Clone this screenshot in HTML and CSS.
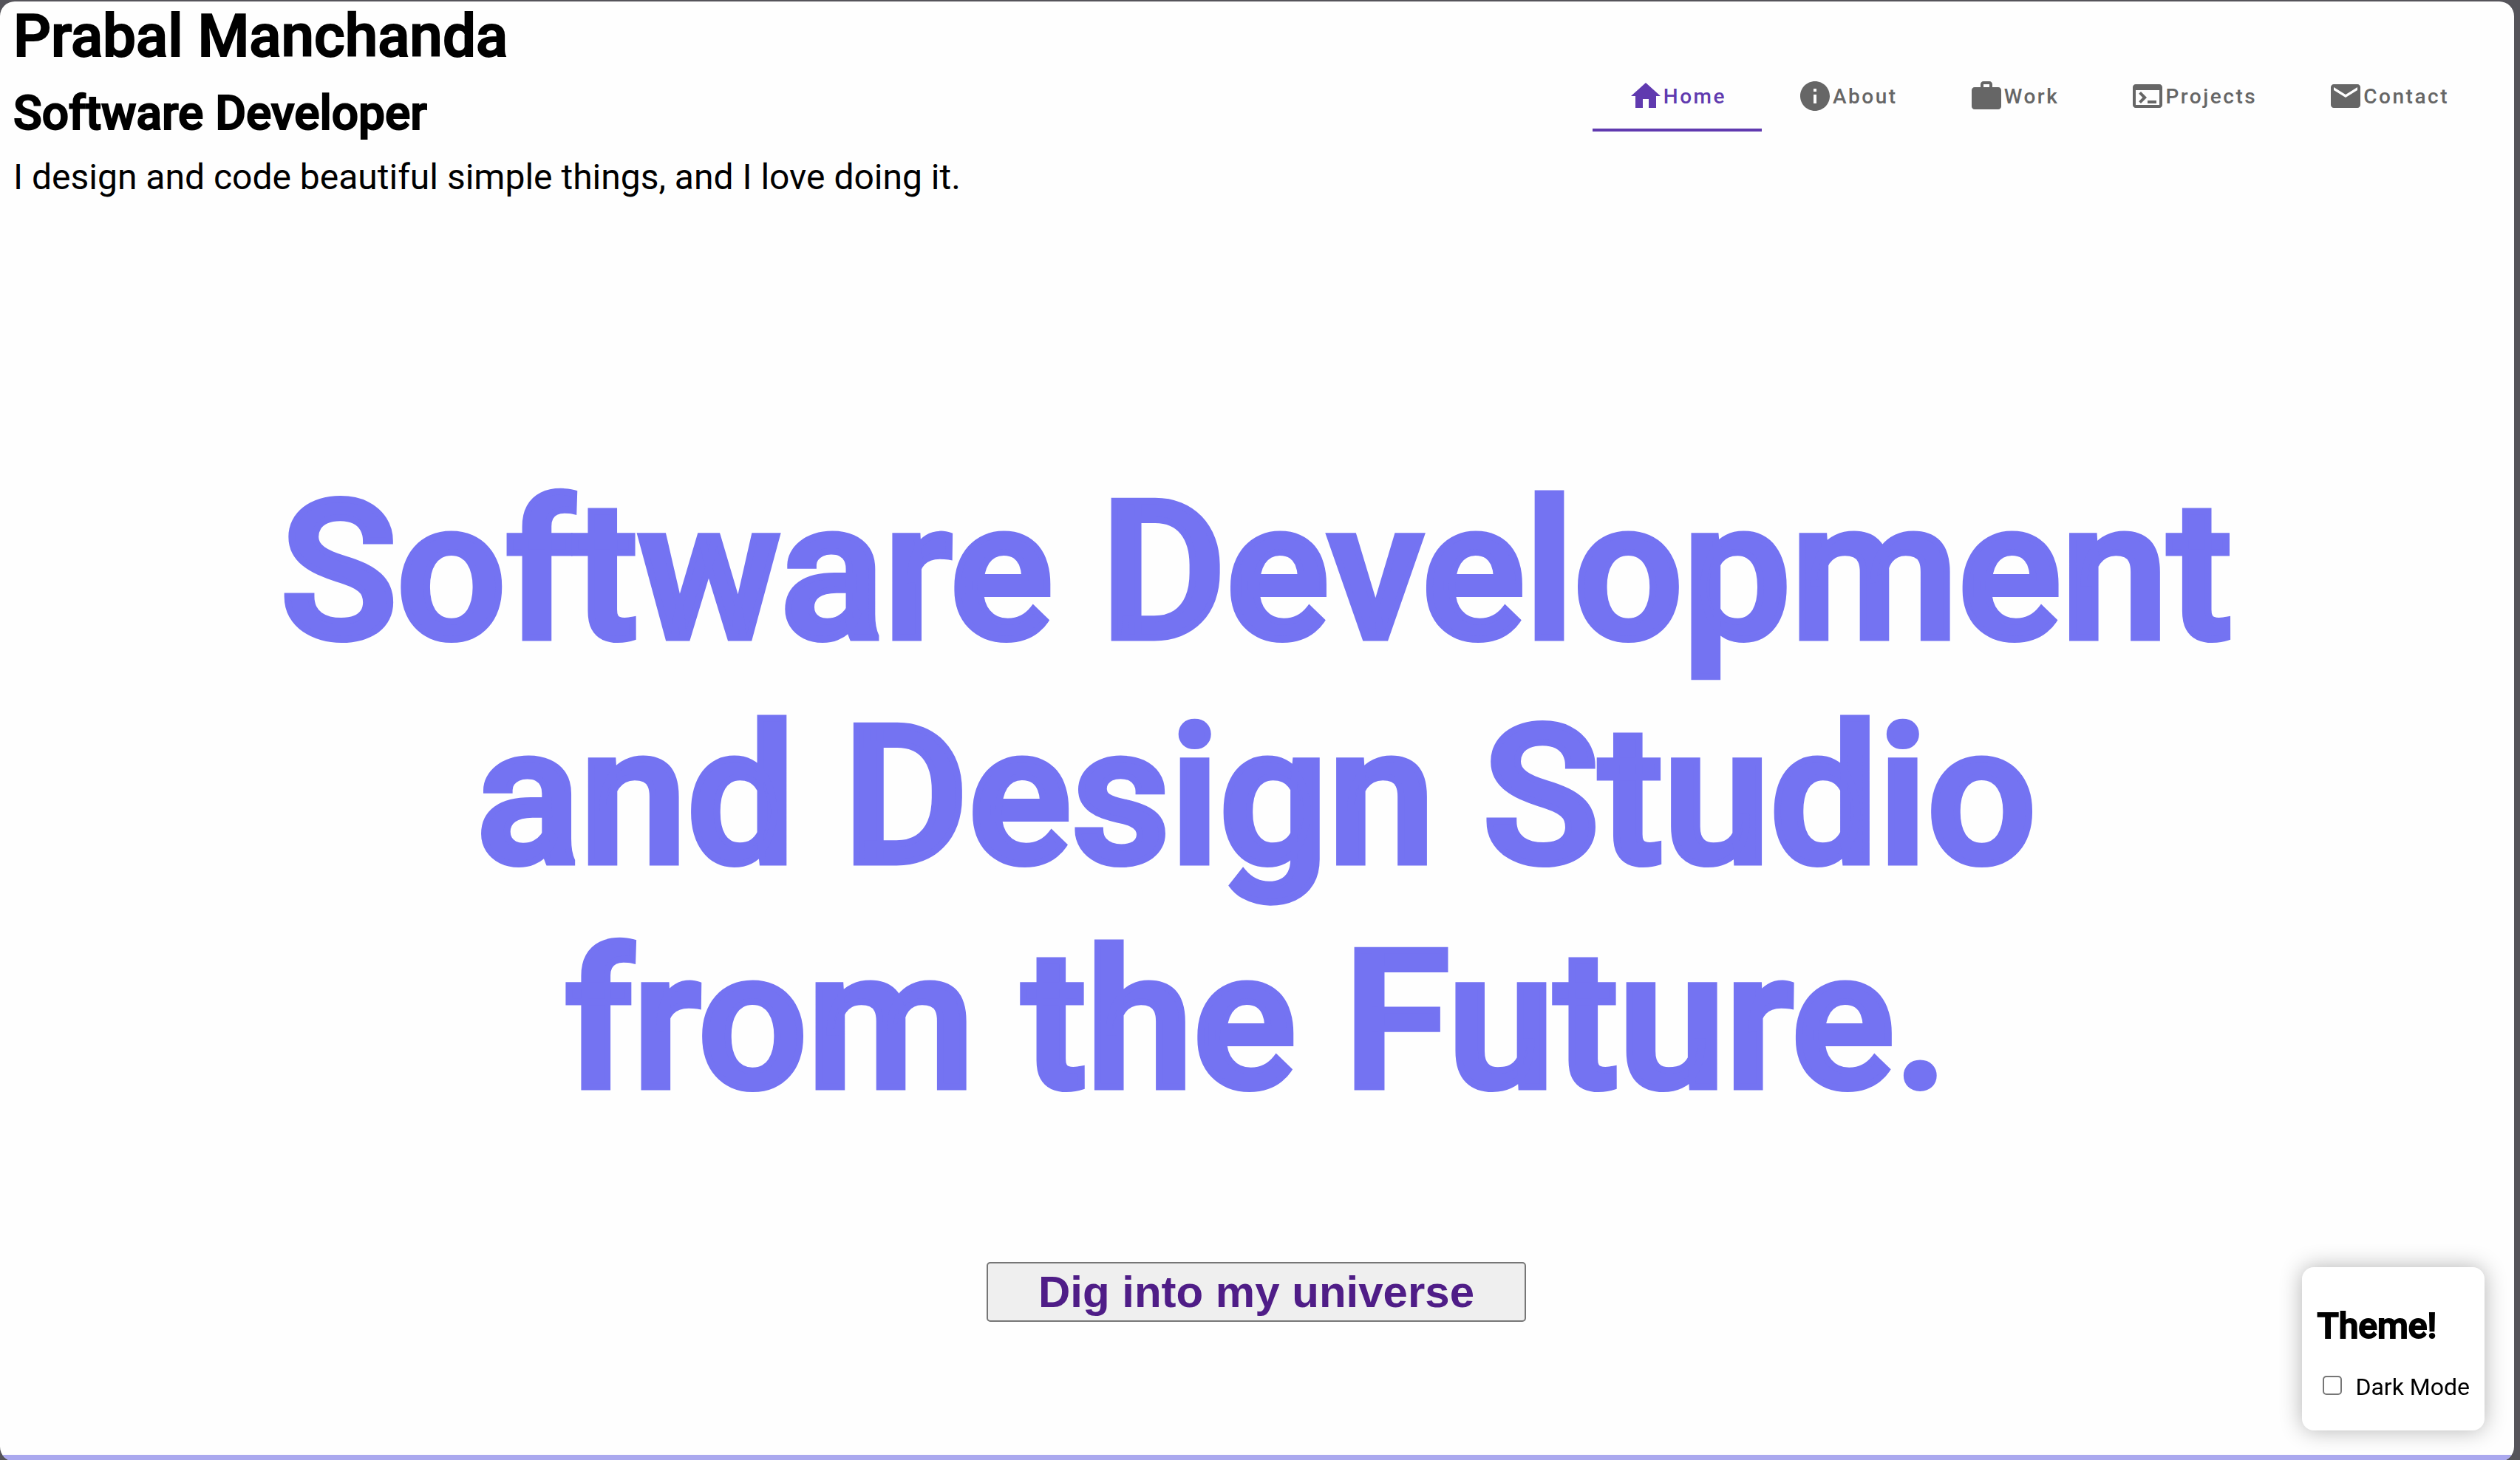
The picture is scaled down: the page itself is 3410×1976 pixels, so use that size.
FILE: index.html
```html
<!DOCTYPE html>
<html lang="en">
<head>
<meta charset="utf-8">
<meta name="viewport" content="width=device-width, initial-scale=1">
<title>Prabal Manchanda</title>
<link rel="stylesheet" href="styles.css">
</head>
<body>
<div class="window">
  <header class="header">
    <div class="intro">
      <h1 class="name">Prabal Manchanda</h1>
      <h2 class="role">Software Developer</h2>
      <p class="tagline">I design and code beautiful simple things, and I love doing it.</p>
    </div>
    <nav class="tabs">
      <a class="tab tab-active" href="#home"><svg class="icon" viewBox="0 0 24 24"><path d="M10 20v-6h4v6h5v-8h3L12 3 2 12h3v8z"/></svg>Home</a>
      <a class="tab" href="#about"><svg class="icon" viewBox="0 0 24 24"><path d="M12 2C6.48 2 2 6.48 2 12s4.480 10 10 10 10-4.480 10-10S17.520 2 12 2zm1 15h-2v-6h2v6zm0-8h-2V7h2v2z"/></svg>About</a>
      <a class="tab" href="#work"><svg class="icon" viewBox="0 0 24 24"><path d="M20 6h-4V4c0-1.110-.890-2-2-2h-4c-1.110 0-2 .890-2 2v2H4c-1.110 0-1.990.890-1.990 2L2 19c0 1.110.890 2 2 2h16c1.110 0 2-.890 2-2V8c0-1.110-.890-2-2-2zm-6 0h-4V4h4v2z"/></svg>Work</a>
      <a class="tab" href="#projects"><svg class="icon" viewBox="0 0 24 24"><path d="M20 4H4c-1.110 0-2 .900-2 2v12c0 1.100.890 2 2 2h16c1.100 0 2-.900 2-2V6c0-1.100-.890-2-2-2zm0 14H4V8h16v10zm-2-1h-6v-2h6v2zM7.500 17l-1.410-1.410L8.670 13l-2.590-2.590L7.500 9l4 4-4 4z"/></svg>Projects</a>
      <a class="tab" href="#contact"><svg class="icon" viewBox="0 0 24 24"><path d="M20 4H4c-1.100 0-1.990.900-1.990 2L2 18c0 1.100.900 2 2 2h16c1.100 0 2-.900 2-2V6c0-1.100-.900-2-2-2zm0 4l-8 5-8-5V6l8 5 8-5v2z"/></svg>Contact</a>
    </nav>
  </header>
  <main class="hero">
    <h2 class="headline">Software Development<br>and Design Studio<br>from the Future.</h2>
    <button class="cta" type="button">Dig into my universe</button>
  </main>
  <div class="next-section"></div>
</div>
<aside class="theme">
  <h3 class="theme-title">Theme!</h3>
  <label class="theme-option"><input class="checkbox" type="checkbox">Dark Mode</label>
</aside>
</body>
</html>
```
FILE: styles.css
```css
* {
  box-sizing: border-box;
}

body {
  margin: 0;
  height: 100vh;
  padding: 2px 8px 0 0;
  overflow: hidden;
  background: #55545a;
  color: #000;
  font-family: Roboto, sans-serif;
  font-size: 32px;
}

h1, h2, h3, p {
  margin: 0;
}

.window {
  display: flex;
  flex-direction: column;
  height: 100vh;
  border-radius: 20px;
  background: #fefefe;
  overflow: hidden;
}

.header {
  display: flex;
  justify-content: space-between;
  align-items: flex-start;
  padding: 0 40px 0 18px;
}

.name, .role, .headline, .theme-title {
  font-weight: 500;
}

.name {
  font-size: 80px;
  line-height: 94px;
  -webkit-text-stroke: 2px;
}

.role {
  margin-top: 20px;
  font-size: 64px;
  line-height: 76px;
  -webkit-text-stroke: 2px;
}

.tagline {
  margin-top: 20px;
  font-size: 48px;
  line-height: 56px;
}

.tabs {
  display: flex;
  margin-top: 80px;
}

.tab {
  display: flex;
  align-items: center;
  height: 96px;
  padding: 0 48px;
  border-bottom: 4px solid transparent;
  border-top: 4px solid transparent;
  color: #666;
  font-size: 28px;
  font-weight: 500;
  letter-spacing: 0.09em;
  text-decoration: none;
}

.tab-active {
  border-bottom-color: #603aaf;
  color: #603aaf;
}

.icon {
  width: 48px;
  height: 48px;
  fill: currentColor;
}

.hero {
  flex: 1;
  display: flex;
  flex-direction: column;
  align-items: center;
  padding: 354px 2px 0 0;
}

.headline {
  color: #7473f2;
  font-size: 260px;
  line-height: 304px;
  text-align: center;
  -webkit-text-stroke: 9px;
}

.cta {
  width: 730px;
  height: 81px;
  margin-top: 174px;
  padding: 0;
  border: 2px solid #767676;
  border-radius: 5px;
  background: #efefef;
  color: #4f1d87;
  font-family: "Liberation Sans", Arial, sans-serif;
  font-size: 60px;
  font-weight: 700;
}

.next-section {
  height: 9px;
  background: #aaa8ee;
}

.theme {
  position: fixed;
  right: 48px;
  bottom: 40px;
  padding: 52px 20px 40px;
  border-radius: 16px;
  background: #fff;
  box-shadow: 0 0 30px rgba(0, 0, 0, 0.3);
}

.theme-title {
  font-size: 48px;
  line-height: 56px;
  -webkit-text-stroke: 2px;
}

.theme-option {
  display: flex;
  align-items: center;
  margin-top: 35px;
  line-height: 38px;
}

.checkbox {
  appearance: none;
  width: 26px;
  height: 26px;
  margin: 0 18px 4px 8px;
  border: 2px solid #767676;
  border-radius: 5px;
  background: #fff;
}

.checkbox:checked {
  background: #603aaf;
}
```
